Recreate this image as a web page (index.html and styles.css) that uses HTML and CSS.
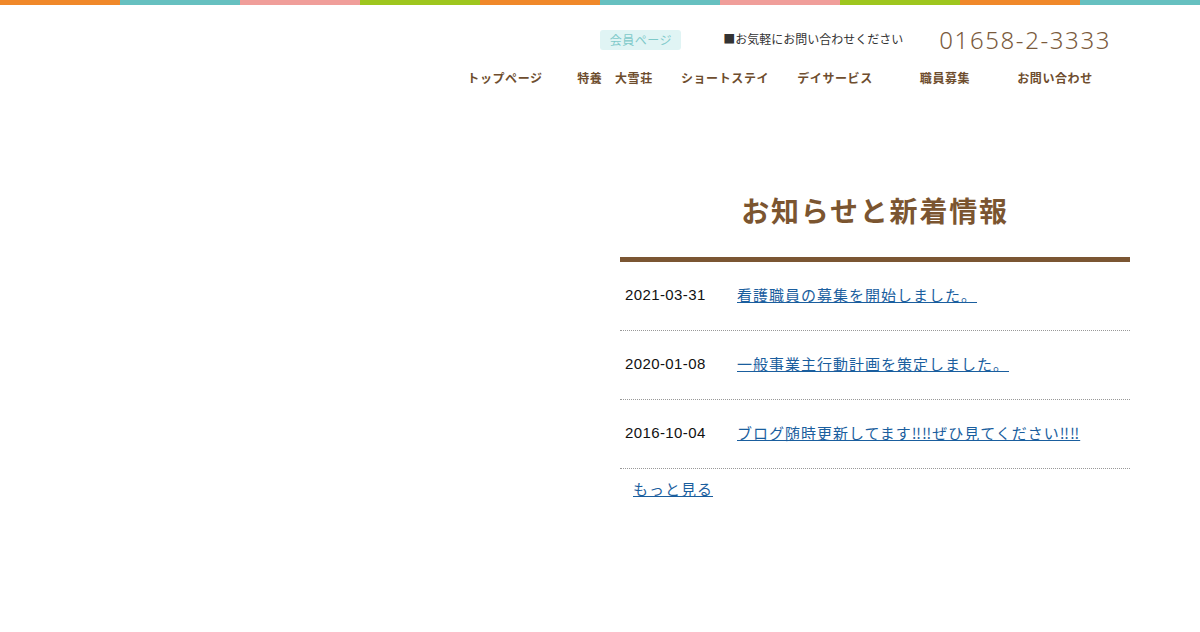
FILE: index.html
```html
<!DOCTYPE html>
<html lang="ja">
<head>
<meta charset="utf-8">
<title>お知らせと新着情報</title>
<link rel="stylesheet" href="styles.css">
</head>
<body>
<div class="stripe">
  <span class="c-orange"></span><span class="c-teal"></span><span class="c-pink"></span><span class="c-green"></span><span class="c-orange"></span><span class="c-teal"></span><span class="c-pink"></span><span class="c-green"></span><span class="c-orange"></span><span class="c-teal"></span>
</div>
<header class="header">
  <div class="topbar">
    <a class="badge" href="#">会員ページ</a>
    <span class="info">■お気軽にお問い合わせください</span>
    <span class="phone">01658-2-3333</span>
  </div>
  <nav class="nav">
    <a href="#">トップページ</a>
    <a href="#">特養　大雪荘</a>
    <a href="#">ショートステイ</a>
    <a href="#">デイサービス</a>
    <a href="#">職員募集</a>
    <a href="#">お問い合わせ</a>
  </nav>
</header>
<main class="news">
  <h2 class="news-title">お知らせと新着情報</h2>
  <ul class="news-list">
    <li class="news-row"><span class="date">2021-03-31</span><a class="news-link" href="#">看護職員の募集を開始しました。 </a></li>
    <li class="news-row"><span class="date">2020-01-08</span><a class="news-link" href="#">一般事業主行動計画を策定しました。 </a></li>
    <li class="news-row"><span class="date">2016-10-04</span><a class="news-link" href="#">ブログ随時更新してます‼‼ぜひ見てください‼‼</a></li>
  </ul>
  <a class="more" href="#">もっと見る </a>
</main>
</body>
</html>
```
FILE: styles.css
```css
html, body {
  margin: 0;
  padding: 0;
  background: #fff;
}
body {
  font-family: "Noto Sans CJK JP", "Noto Sans", sans-serif;
  color: #333;
}
.stripe {
  display: flex;
  height: 5px;
}
.stripe span {
  flex: 0 0 120px;
}
.c-orange { background: #f0882a; }
.c-teal { background: #66c0c0; }
.c-pink { background: #f09e9a; }
.c-green { background: #9ec61e; }

.header {
  display: flex;
  flex-direction: column;
  align-items: flex-end;
  padding-right: 89px;
}
.topbar {
  display: flex;
  align-items: center;
  margin-top: 22px;
  height: 26px;
}
.badge {
  display: block;
  width: 81px;
  height: 20px;
  line-height: 20px;
  text-align: center;
  background: #e0f4f4;
  color: #7ec9c9;
  font-size: 12px;
  border-radius: 3px;
  text-decoration: none;
  margin-right: 42px;
  letter-spacing: 0.5px;
}
.info {
  font-size: 12px;
  color: #333;
  margin-right: 36px;
  margin-top: -4px;
}
.phone {
  font-family: "Noto Sans", sans-serif;
  font-weight: 300;
  font-size: 24px;
  letter-spacing: 1.6px;
  color: #7a5a3c;
  line-height: 26px;
}
.nav {
  display: flex;
  margin-top: 15px;
  margin-right: 1px;
}
.nav a {
  width: 110px;
  height: 20px;
  line-height: 20px;
  text-align: center;
  font-size: 12px;
  font-weight: bold;
  color: #6e4d2e;
  text-decoration: none;
  letter-spacing: 0.6px;
}

.news {
  width: 510px;
  margin-left: 620px;
}
.news-title {
  margin: 102px 0 27px;
  height: 40px;
  line-height: 40px;
  text-align: center;
  font-size: 28px;
  font-weight: bold;
  letter-spacing: 1.8px;
  color: #7b5530;
}
.news-list {
  list-style: none;
  margin: 0;
  padding: 0;
  border-top: 5px solid #7b5633;
}
.news-row {
  display: flex;
  align-items: center;
  height: 64px;
  padding-bottom: 4px;
  border-bottom: 1px dotted #999;
}
.date {
  width: 112px;
  padding-left: 5px;
  font-family: "Liberation Sans", Arial, sans-serif;
  font-size: 15px;
  letter-spacing: 0.4px;
  color: #111;
}
.news-link {
  font-size: 15px;
  letter-spacing: 1px;
  color: #1a5e9e;
  text-decoration: underline;
}
.more {
  display: inline-block;
  margin: 9px 0 0 13px;
  font-size: 15px;
  letter-spacing: 1px;
  color: #1a5e9e;
  text-decoration: underline;
}
```
